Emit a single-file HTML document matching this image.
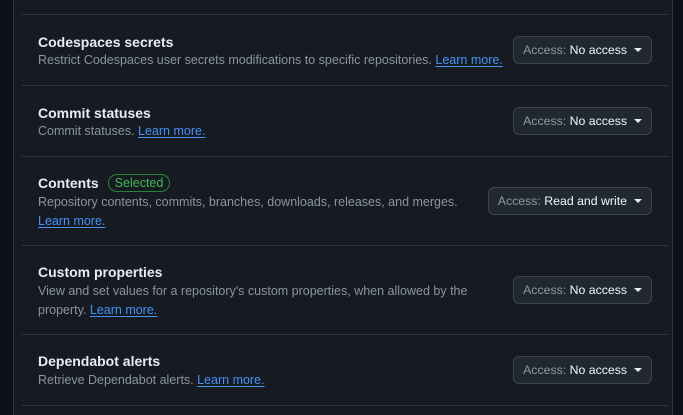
<!DOCTYPE html><html><head><style>
body{margin:0;width:683px;height:415px;background:#0d1117;position:relative;overflow:hidden;font-family:"Liberation Sans","DejaVu Sans",sans-serif}
.panel{position:absolute;left:13px;top:0;width:658px;height:415px;background:#161b22;border-left:1px solid #30363d;border-right:1px solid #30363d}
.sep{position:absolute;left:22px;width:646px;height:1px;background:#30363d}
.t{position:absolute;left:38px;color:#e6edf3;font-size:14px;font-weight:bold;line-height:18px;white-space:nowrap}
.d{position:absolute;left:38px;color:#8b949e;font-size:12.5px;line-height:19px;width:440px}
a{color:#4493f8;text-decoration:underline;text-underline-offset:2px}
.b{position:absolute;right:31px;height:26px;border:1px solid #3d444d;border-radius:6px;background:#212830;color:#f0f6fc;font-size:12.3px;line-height:26px;padding:0 24px 0 9px;white-space:nowrap}
.b span{color:#9198a1}
.b:after{content:"";position:absolute;right:9px;top:11px;border-left:4px solid transparent;border-right:4px solid transparent;border-top:4px solid #e6edf3}
.sel{display:inline-block;margin-left:9px;border:1px solid #238636;border-radius:10px;color:#3fb950;font-size:12.5px;font-weight:normal;line-height:16px;padding:0 6px;vertical-align:1px}
</style></head><body>
<div class="panel"></div>
<div class="sep" style="top:14px"></div>
<div class="sep" style="top:85px"></div>
<div class="sep" style="top:156px"></div>
<div class="sep" style="top:245px"></div>
<div class="sep" style="top:334px"></div>
<div class="sep" style="top:405px"></div>

<div class="t" style="top:33px">Codespaces secrets</div>
<div class="d" style="top:51px;width:480px">Restrict Codespaces user secrets modifications to specific repositories. <a>Learn more.</a></div>
<div class="b" style="top:36px"><span>Access:</span> No access</div>

<div class="t" style="top:104px">Commit statuses</div>
<div class="d" style="top:122px">Commit statuses. <a>Learn more.</a></div>
<div class="b" style="top:107px"><span>Access:</span> No access</div>

<div class="t" style="top:174px">Contents<span class="sel">Selected</span></div>
<div class="d" style="top:193px;width:440px">Repository contents, commits, branches, downloads, releases, and merges. <a>Learn more.</a></div>
<div class="b" style="top:187px"><span>Access:</span> Read and write</div>

<div class="t" style="top:263px">Custom properties</div>
<div class="d" style="top:282px;width:445px">View and set values for a repository's custom properties, when allowed by the property. <a>Learn more.</a></div>
<div class="b" style="top:276px"><span>Access:</span> No access</div>

<div class="t" style="top:352px">Dependabot alerts</div>
<div class="d" style="top:371px">Retrieve Dependabot alerts. <a>Learn more.</a></div>
<div class="b" style="top:356px"><span>Access:</span> No access</div>
</body></html>
